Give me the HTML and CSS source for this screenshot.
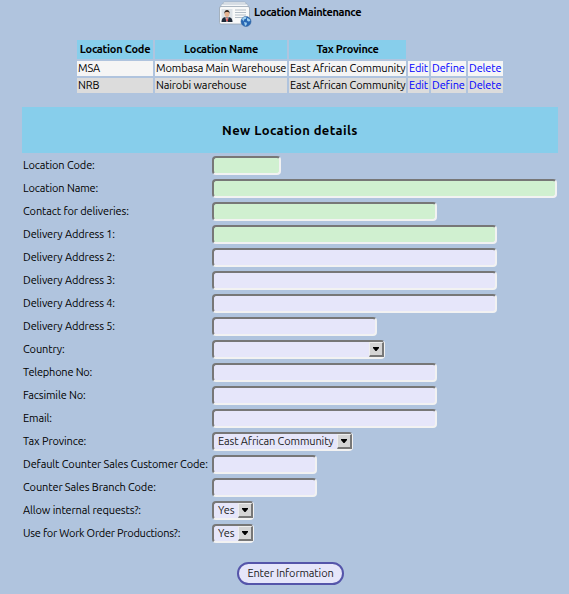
FILE: index.html
```html
<!DOCTYPE html>
<html lang="en">
<head>
<meta charset="utf-8">
<title>Location Maintenance</title>
<link rel="stylesheet" href="styles.css">
</head>
<body>
<header class="title">
<svg class="icon" width="34" height="26" viewBox="0 0 34 26">
<rect x="4" y="1" width="23" height="18" rx="1.5" fill="#f1f5f8" stroke="#a2b0bf" stroke-width=".7"/>
<rect x="2" y="3" width="27" height="18" rx="1.5" fill="#f5f7f9" stroke="#a2b0bf" stroke-width=".7"/>
<rect x=".5" y="5.5" width="30" height="17.5" rx="1.5" fill="#f8f9f9" stroke="#98a5b2" stroke-width=".8"/>
<rect x="2.5" y="8" width="11" height="13" fill="#dce2e7"/>
<path d="M2.500 21c0-3 1.200-4.500 4-5h3c2.800.5 4 2 4 5z" fill="#202a38"/>
<path d="M6.400 15.800l1.600 1 1.600-1-.8 4.500-.8.7-.8-.7z" fill="#fff"/>
<path d="M7.600 16.500h.9l.4 3-.8 1.200-.8-1.200z" fill="#c42e2b"/>
<ellipse cx="8" cy="12.800" rx="2.400" ry="3.200" fill="#e6b492"/>
<path d="M5.400 13c-.8-5 5.800-5.500 5.300 0-.5-2-1.200-2-2.700-2s-2.200.2-2.600 2z" fill="#352720"/>
<path d="M16 9h11M16 11.500h11M16 14h11M16 16.500h8" stroke="#b4bec7" fill="none"/>
<circle cx="27" cy="20.500" r="5" fill="#2867b3" stroke="#32649e" stroke-width=".6"/>
<path d="M23 18c1-2 3-2.500 4.500-2.300l-.5 2-2 .7-.5 2zM28 17l2.500 1 .8 2-2 .5-1.300-1zM25 21l3 .7-.5 2.300-1.500 1z" fill="#9ed0ef"/>
</svg>
<span>Location Maintenance</span>
</header>
<table class="locations">
<colgroup><col class="c1"><col class="c2"><col class="c3"><col class="c4"><col class="c5"><col class="c6"></colgroup>
<tr><th>Location Code</th><th>Location Name</th><th>Tax Province</th></tr>
<tr class="odd"><td>MSA</td><td>Mombasa Main Warehouse</td><td>East African Community</td><td><a>Edit</a></td><td><a>Define</a></td><td><a>Delete</a></td></tr>
<tr class="even"><td>NRB</td><td>Nairobi warehouse</td><td>East African Community</td><td><a>Edit</a></td><td><a>Define</a></td><td><a>Delete</a></td></tr>
</table>
<form>
<h2>New Location details</h2>
<div class="fields">
<label>Location Code:</label><input class="req w69">
<label>Location Name:</label><input class="req w345">
<label>Contact for deliveries:</label><input class="req w225">
<label>Delivery Address 1:</label><input class="req w285">
<label>Delivery Address 2:</label><input class="w285">
<label>Delivery Address 3:</label><input class="w285">
<label>Delivery Address 4:</label><input class="w285">
<label>Delivery Address 5:</label><input class="w165">
<label>Country:</label><div class="select w173"><span></span><i><svg width="6" height="4"><path d="M0 0h6v1L3.500 4h-1L0 1z"/></svg></i></div>
<label class="snug">Telephone No:</label><input class="w225">
<label>Facsimile No:</label><input class="w225">
<label>Email:</label><input class="w225">
<label>Tax Province:</label><div class="select w141"><span>East African Community</span><i><svg width="6" height="4"><path d="M0 0h6v1L3.500 4h-1L0 1z"/></svg></i></div>
<label>Default Counter Sales Customer Code:</label><input class="w105">
<label>Counter Sales Branch Code:</label><input class="w105">
<label>Allow internal requests?:</label><div class="select w42"><span>Yes</span><i><svg width="6" height="4"><path d="M0 0h6v1L3.500 4h-1L0 1z"/></svg></i></div>
<label class="tight">Use for Work Order Productions?:</label><div class="select w42"><span>Yes</span><i><svg width="6" height="4"><path d="M0 0h6v1L3.500 4h-1L0 1z"/></svg></i></div>
</div>
<button type="button">Enter Information</button>
</form>
</body>
</html>
```
FILE: styles.css
```css
* { box-sizing: border-box; }
body { margin: 0; height: 594px; overflow: hidden; background: #b0c4de; color: #000; font: 11px/15px Ubuntu, "Noto Sans", sans-serif; letter-spacing: -.12px; }
.title { display: flex; height: 26px; margin: 1px 0 0 219px; font-weight: 600; letter-spacing: -.33px; }
.title span { margin: 4px 0 0 1px; white-space: nowrap; }
.icon { flex: none; }
.locations { table-layout: fixed; width: 430px; margin: 11px 0 0 75px; border-collapse: separate; border-spacing: 2px; }
.c1 { width: 76px; } .c2 { width: 132px; } .c3 { width: 117px; }
.c4 { width: 21px; } .c5 { width: 35px; } .c6 { width: 35px; }
th, td { padding: 0 1px; height: 15px; line-height: 15px; white-space: nowrap; text-align: left; }
th { height: 19px; background: #87ceeb; font-weight: 600; text-align: center; letter-spacing: -.25px; }
.odd td { background: #f5f5f5; }
.even td { background: #dcdcdc; }
a { color: #00f; }
form { width: 536px; margin: 12px 0 0 22px; }
h2 { height: 46px; margin: 0 0 3px; background: #87ceeb; font-size: 13px; line-height: 46px; font-weight: 600; text-align: center; letter-spacing: .4px; }
.fields { display: grid; grid-template-columns: 189px 346px; grid-auto-rows: 19px; row-gap: 4px; align-items: center; }
label { padding-left: 1px; white-space: nowrap; }
.snug { letter-spacing: -.2px; }
.tight { letter-spacing: -.25px; }
input, .select { height: 19px; margin: 0 0 0 1px; padding: 0; border: 2px solid; border-color: #777 #f2f2f2 #f2f2f2 #777; border-radius: 4px; background: #e6e6fa; outline: 0; }
input.req { background: #d0f0d0; }
.select { display: flex; justify-content: space-between; color: #222; }
.select span { padding-left: 4px; white-space: nowrap; }
.select i { display: flex; flex: none; align-items: center; justify-content: center; width: 15px; height: 15px; margin-right: -1px; border: 1px solid; border-color: #eee #777 #777 #eee; border-right-width: 2px; border-bottom-width: 2px; background: #d5d5d5; }
.w42 { width: 42px; } .w69 { width: 69px; } .w105 { width: 105px; } .w141 { width: 141px; }
.w165 { width: 165px; } .w173 { width: 173px; } .w225 { width: 225px; } .w285 { width: 285px; } .w345 { width: 345px; }
button { display: block; width: 107px; height: 23px; margin: 19px 0 0 215px; padding: 0; border: 2px solid #5555aa; border-radius: 12px; background: #e6e6fa; color: #222; font: inherit; letter-spacing: inherit; white-space: nowrap; }
```
